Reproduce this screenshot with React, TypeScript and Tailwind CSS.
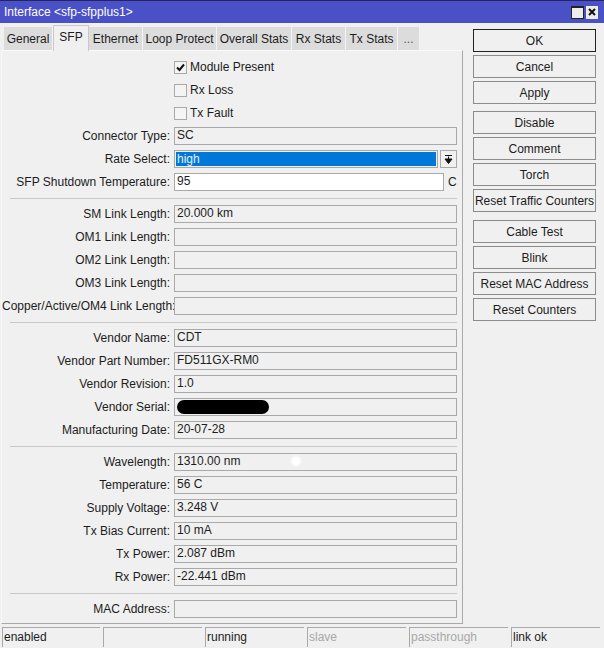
import React from 'react';

const tabs = ['General', 'SFP', 'Ethernet', 'Loop Protect', 'Overall Stats', 'Rx Stats', 'Tx Stats', '...'];
const tabWidths = ['w-[49px]', 'w-[36px]', 'w-[54px]', 'w-[74px]', 'w-[75px]', 'w-[54px]', 'w-[52px]', 'w-[22px]'];

function Field({ label, value, children }: { label: string; value?: string; children?: React.ReactNode }) {
  return (
    <div className="flex h-[18px] items-center mt-[5px] first:mt-0">
      <div className="w-[168px] text-right whitespace-nowrap">{label}</div>
      <div className="ml-[4px] w-[283px] h-[18px] border border-[#a9a9a9] px-[2px] leading-[15px] whitespace-nowrap relative">
        {value}
        {children}
      </div>
    </div>
  );
}

function Check({ label, checked }: { label: string; checked?: boolean }) {
  return (
    <div className="flex h-[18px] items-center mt-[5px] first:mt-0 pl-[172px]">
      <div className="w-[13px] h-[13px] bg-[#f4f4f4] border border-[#a9a9a9] flex items-center justify-center">
        {checked && (
          <svg width="9" height="9" viewBox="0 0 9 9" fill="none">
            <path d="M1 4.5 L3.5 7 L8 1.5" stroke="#111" strokeWidth="2" />
          </svg>
        )}
      </div>
      <span className="ml-[3px]">{label}</span>
    </div>
  );
}

function Sep() {
  return <div className="h-px bg-[#c8c8c8] ml-[8px] w-[447px] mt-[7px] mb-[6px]" />;
}

function Btn({ label, strong, cls }: { label: string; strong?: boolean; cls?: string }) {
  return (
    <div className={`w-[123px] h-[23px] flex items-center justify-center border ${strong ? 'border-[#222]' : 'border-[#8c8c8c]'} ${cls ?? 'mt-[3px]'}`}>
      {label}
    </div>
  );
}

function StatusCell({ text, dim, cls }: { text?: string; dim?: boolean; cls: string }) {
  return (
    <div className={`h-[20px] border-t border-l border-[#a9a9a9] pl-[1px] leading-[19px] ${dim ? 'text-[#a8a8a8]' : ''} ${cls}`}>
      {text}
    </div>
  );
}

export default function App() {
  return (
    <div className="w-[604px] h-[648px] overflow-hidden bg-[#f0f0f0] text-[#1c1c1c] text-[12px] relative font-['Liberation_Sans',sans-serif]">
      <div className="h-[23px] bg-[#4a50c5] border-t border-[#23255f] flex items-center justify-between pl-[4px] pr-[6px] text-white">
        <span>Interface &lt;sfp-sfpplus1&gt;</span>
        <div className="flex gap-[2px]">
          <div className="w-[13px] h-[13px] bg-[#ececec] border border-[#222] border-t-[2px]" />
          <div className="w-[12px] h-[13px] bg-[#ececec] flex items-center justify-center">
            <svg width="8" height="8" viewBox="0 0 8 8"><path d="M1 1 L7 7 M7 1 L1 7" stroke="#111" strokeWidth="2" /></svg>
          </div>
        </div>
      </div>

      <div className="flex">
        <div className="w-[463px]">
          <div className="flex h-[27px] items-end pl-[4px] relative z-10">
            {tabs.map((t, i) =>
              t === 'SFP' ? (
                <div key={t} className={`${tabWidths[i]} h-[26px] mb-[-1px] bg-[#f0f0f0] border-x border-t border-[#c8c8c8] flex items-center justify-center pb-[3px]`}>
                  {t}
                </div>
              ) : (
                <div key={t} className={`${tabWidths[i]} h-[23px] bg-[#dcdcdc] border-r border-[#f4f4f4] flex items-center justify-center ${t === '...' ? 'text-[#555]' : ''}`}>
                  {t}
                </div>
              )
            )}
          </div>
          <div className="h-[574px] ml-[1px] w-[462px] border-t border-r border-b border-t-[#fafafa] border-r-[#a9a9a9] border-b-[#a9a9a9] border-l border-l-[#f8f8f8] -ml-0 pt-[7px]">
            <Check label="Module Present" checked />
            <Check label="Rx Loss" />
            <Check label="Tx Fault" />
            <div className="mt-[5px]">
              <Field label="Connector Type:" value="SC" />
              <div className="flex h-[18px] items-center mt-[5px]">
                <div className="w-[168px] text-right">Rate Select:</div>
                <div className="ml-[4px] w-[264px] h-[18px] border border-[#a9a9a9] p-px">
                  <div className="h-full bg-[#0078d7] text-[#e8f0f8] leading-[14px] px-px">high</div>
                </div>
                <div className="ml-[2px] w-[17px] h-[18px] border border-[#a9a9a9] flex items-center justify-center">
                  <svg width="9" height="9" viewBox="0 0 9 9"><path d="M1 0.5 H8 M4.5 1.5 V4 M1 4 H8 L4.5 8.5 Z" stroke="#111" fill="#111" strokeWidth="1" /></svg>
                </div>
              </div>
              <div className="flex h-[18px] items-center mt-[5px]">
                <div className="w-[168px] text-right">SFP Shutdown Temperature:</div>
                <div className="ml-[4px] w-[270px] h-[18px] border border-[#a9a9a9] bg-white px-[2px] leading-[15px]">95</div>
                <span className="ml-[4px]">C</span>
              </div>
            </div>
            <Sep />
            <Field label="SM Link Length:" value="20.000 km" />
            <Field label="OM1 Link Length:" />
            <Field label="OM2 Link Length:" />
            <Field label="OM3 Link Length:" />
            <Field label="Copper/Active/OM4 Link Length:" />
            <Sep />
            <Field label="Vendor Name:" value="CDT" />
            <Field label="Vendor Part Number:" value="FD511GX-RM0" />
            <Field label="Vendor Revision:" value="1.0" />
            <Field label="Vendor Serial:">
              <div className="absolute left-[2px] top-[1px] w-[92px] h-[14px] bg-black rounded-full" />
            </Field>
            <Field label="Manufacturing Date:" value="20-07-28" />
            <Sep />
            <Field label="Wavelength:" value="1310.00 nm" />
            <Field label="Temperature:" value="56 C" />
            <Field label="Supply Voltage:" value="3.248 V" />
            <Field label="Tx Bias Current:" value="10 mA" />
            <Field label="Tx Power:" value="2.087 dBm" />
            <Field label="Rx Power:" value="-22.441 dBm" />
            <Sep />
            <Field label="MAC Address:" />
          </div>
        </div>

        <div className="ml-[10px] pt-[6px] flex flex-col">
          <Btn label="OK" strong cls="mt-0" />
          <Btn label="Cancel" />
          <Btn label="Apply" />
          <Btn label="Disable" cls="mt-[7px]" />
          <Btn label="Comment" />
          <Btn label="Torch" />
          <Btn label="Reset Traffic Counters" />
          <Btn label="Cable Test" cls="mt-[8px]" />
          <Btn label="Blink" />
          <Btn label="Reset MAC Address" />
          <Btn label="Reset Counters" />
        </div>
      </div>

      <div className="absolute left-[2px] top-[627px] flex">
        <StatusCell text="enabled" cls="w-[98px]" />
        <StatusCell cls="w-[99px] ml-[3px]" />
        <StatusCell text="running" cls="w-[99px] ml-[3px]" />
        <StatusCell text="slave" dim cls="w-[99px] ml-[3px]" />
        <StatusCell text="passthrough" dim cls="w-[99px] ml-[3px]" />
        <StatusCell text="link ok" cls="w-[89px] ml-[3px]" />
      </div>

      <div className="absolute left-[291px] top-[456px] w-[10px] h-[10px] rounded-full bg-white blur-[1px]" />
    </div>
  );
}
